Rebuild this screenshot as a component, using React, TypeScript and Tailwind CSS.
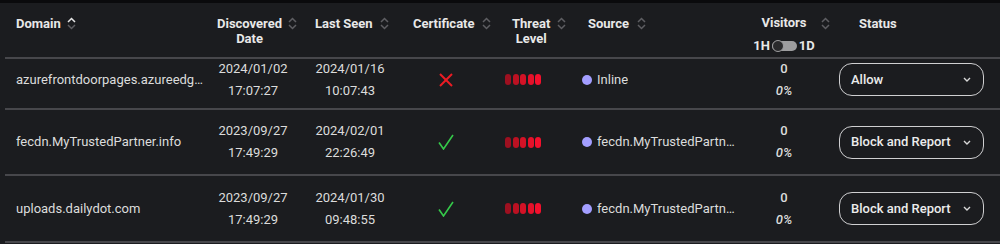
import React from "react";

const SortIcon = ({ active = false }: { active?: boolean }) => (
  <svg width="9" height="13" viewBox="0 0 9 13" className="shrink-0 mt-[1px]">
    <polyline points="1,5 4.5,1.5 8,5" fill="none" stroke={active ? "#e6e6e6" : "#5e5e62"} strokeWidth="1.5" />
    <polyline points="1,8 4.5,11.5 8,8" fill="none" stroke="#5e5e62" strokeWidth="1.5" />
  </svg>
);

const CrossIcon = () => (
  <svg width="16" height="16" viewBox="0 0 16 16">
    <line x1="2" y1="2" x2="14" y2="14" stroke="#ec1c24" strokeWidth="2" />
    <line x1="14" y1="2" x2="2" y2="14" stroke="#ec1c24" strokeWidth="2" />
  </svg>
);

const CheckIcon = () => (
  <svg width="16" height="16" viewBox="0 0 16 16">
    <polyline points="1,8.5 5.5,15 15,1" fill="none" stroke="#35c94a" strokeWidth="1.6" />
  </svg>
);

const Bars = () => {
  const colors = ["#9e1020", "#bb1122", "#d31226", "#e5112a", "#f4102d"];
  return (
    <div className="flex gap-[1.5px]">
      {colors.map((c, i) => (
        <div key={i} className="w-[6px] h-[11px] rounded-full" style={{ backgroundColor: c }} />
      ))}
    </div>
  );
};

const Chevron = () => (
  <svg width="8" height="5" viewBox="0 0 8 5">
    <polyline points="1,1 4,4 7,1" fill="none" stroke="#d8d8d8" strokeWidth="1.4" />
  </svg>
);

type Row = {
  domain: string;
  d1: string;
  t1: string;
  d2: string;
  t2: string;
  cert: boolean;
  source: string;
  status: string;
};

const rows: Row[] = [
  {
    domain: "azurefrontdoorpages.azureedge.net",
    d1: "2024/01/02",
    t1: "17:07:27",
    d2: "2024/01/16",
    t2: "10:07:43",
    cert: false,
    source: "Inline",
    status: "Allow",
  },
  {
    domain: "fecdn.MyTrustedPartner.info",
    d1: "2023/09/27",
    t1: "17:49:29",
    d2: "2024/02/01",
    t2: "22:26:49",
    cert: true,
    source: "fecdn.MyTrustedPartner.info",
    status: "Block and Report",
  },
  {
    domain: "uploads.dailydot.com",
    d1: "2023/09/27",
    t1: "17:49:29",
    d2: "2024/01/30",
    t2: "09:48:55",
    cert: true,
    source: "fecdn.MyTrustedPartner.info",
    status: "Block and Report",
  },
];

const rowClasses = ["h-[51px] pb-[8px]", "h-[66px]", "h-[67px]"];

export default function App() {
  return (
    <div className="w-[1000px] h-[244px] bg-[#1b1c1f] font-['Roboto',sans-serif] text-[13px] text-[#dcdcdc] overflow-hidden">
      <div className="h-[3px] bg-[#0a0a0c]" />
      <div className="ml-[5px] h-[56px] border-b-2 border-[#47474b] flex items-start pt-[13px] font-bold text-[#e8e8e8] leading-[15px]">
        <div className="w-[205px] pl-[11px] flex items-start gap-[6px]">
          <span>Domain</span>
          <SortIcon active />
        </div>
        <div className="w-[90px] pl-[7px] flex items-start gap-[6px]">
          <div className="text-center">
            Discovered
            <br />
            Date
          </div>
          <SortIcon />
        </div>
        <div className="w-[95px] pl-[15px] flex items-start gap-[7px]">
          <span>Last Seen</span>
          <SortIcon />
        </div>
        <div className="w-[100px] pl-[18px] flex items-start gap-[7px]">
          <span>Certificate</span>
          <SortIcon />
        </div>
        <div className="w-[80px] pl-[17px] flex items-start gap-[7px]">
          <div className="text-center">
            Threat
            <br />
            Level
          </div>
          <SortIcon />
        </div>
        <div className="w-[170px] pl-[13px] flex items-start gap-[8px]">
          <span>Source</span>
          <SortIcon />
        </div>
        <div className="w-[90px] pl-[11px] flex items-start gap-[9px]">
          <div className="w-[56px] flex flex-col items-center -mt-[1px]">
            <span>Visitors</span>
            <div className="mt-[8px] flex items-center gap-[2px]">
              <span>1H</span>
              <div className="relative w-[25px] h-[12px] flex items-center">
                <div className="w-full h-[10px] rounded-full bg-[#9d9d9f]" />
                <div className="absolute left-0 top-0 w-[12px] h-[12px] rounded-full bg-[#2a2a2c] border-[1.5px] border-[#9d9d9f]" />
              </div>
              <span>1D</span>
            </div>
          </div>
          <SortIcon />
        </div>
        <div className="w-[165px] pl-[24px]">
          <span>Status</span>
        </div>
      </div>

      {rows.map((r, i) => (
        <div
          key={i}
          className={`ml-[5px] border-b-2 border-[#47474b] flex items-center leading-[22px] ${rowClasses[i]}`}
        >
          <div className="w-[205px] pl-[11px]">
            <div className="max-w-[192px] truncate">{r.domain}</div>
          </div>
          <div className="w-[90px] pl-[8px]">
            <div className="w-[70px] text-center">
              <div>{r.d1}</div>
              <div>{r.t1}</div>
            </div>
          </div>
          <div className="w-[95px] pl-[15px]">
            <div className="w-[70px] text-center">
              <div>{r.d2}</div>
              <div>{r.t2}</div>
            </div>
          </div>
          <div className="w-[100px] pl-[43px] flex items-center">
            {r.cert ? <CheckIcon /> : <CrossIcon />}
          </div>
          <div className="w-[80px] pl-[10px] flex items-center">
            <Bars />
          </div>
          <div className="w-[170px] pl-[7px] flex items-center gap-[5px]">
            <div className="w-[10px] h-[10px] rounded-full bg-[#a39eff] shrink-0" />
            <div className="max-w-[142px] truncate">{r.source}</div>
          </div>
          <div className="w-[90px] pl-[11px]">
            <div className="w-[56px] text-center">
              <div className="font-medium">0</div>
              <div className="italic font-medium">0%</div>
            </div>
          </div>
          <div className="w-[165px] pl-[4px]">
            <div className="w-[145px] h-[33px] rounded-[13px] border-[1.5px] border-[#cfcfd1] flex items-center justify-between pl-[11px] pr-[12px] text-[#ececec] font-medium">
              <span>{r.status}</span>
              <Chevron />
            </div>
          </div>
        </div>
      ))}
    </div>
  );
}
